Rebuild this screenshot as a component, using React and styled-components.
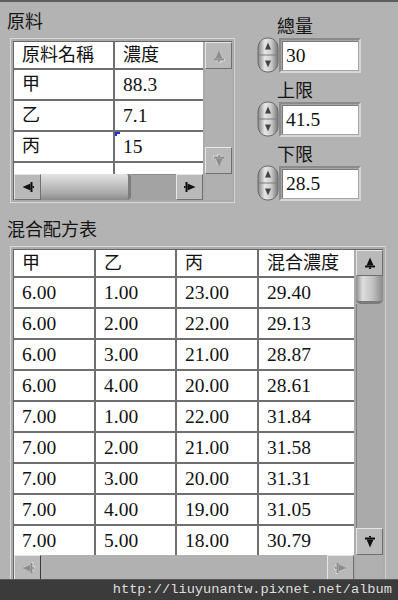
import React from 'react';
import styled, { createGlobalStyle } from 'styled-components';

const GlobalStyle = createGlobalStyle`
  html, body {
    margin: 0;
    padding: 0;
    background: #b3b3b3;
  }
`;

const Panel = styled.div`
  position: relative;
  width: 398px;
  height: 600px;
  box-sizing: border-box;
  overflow: hidden;
  background: #b3b3b3;
  border-top: 2px solid #5c5c5c;
  font-family: "Liberation Serif", "Noto Sans CJK TC", serif;
  color: #111;
`;

const TopSection = styled.div`
  display: flex;
  align-items: flex-start;
  padding-top: 7px;
`;

const LeftPane = styled.div`
  width: 240px;
  padding-left: 10px;
  box-sizing: border-box;
`;

const Caption = styled.div`
  font-family: "Noto Sans CJK TC", sans-serif;
  font-size: 18px;
  line-height: 22px;
  height: 22px;
  margin: 0 0 7px -3px;
  color: #151515;
`;

// bevelled frame round a table
const Frame = styled.div`
  display: inline-block;
  border: 1px solid #dadada;
  border-right-color: #d0d0d0;
  padding: 2px;
  background: #ababab;
`;

const Well = styled.div`
  display: grid;
  grid-template-columns: ${({ $w }) => $w}px 27px;
  grid-template-rows: ${({ $h }) => $h}px 26px;
  column-gap: 2px;
  border-top: 1px solid #666;
  border-left: 1px solid #666;
`;

const CellGrid = styled.div`
  display: grid;
  grid-template-columns: ${({ $cols }) => $cols};
  grid-template-rows: 26px;
  grid-auto-rows: 29px;
  gap: 2px;
  align-content: start;
  background: #6f6f6f;
  overflow: hidden;
`;

const Cell = styled.div`
  position: relative;
  background: #fff;
  padding-left: 8px;
  font-size: ${({ $cjk }) => ($cjk ? '18px' : '19.5px')};
  line-height: ${({ $head }) => ($head ? '26px' : '29px')};
  white-space: nowrap;
  overflow: hidden;
`;

const Caret = styled.span`
  position: absolute;
  left: 0;
  top: 0;
  width: 3px;
  height: 2px;
  border-left: 2px solid #1d2cf0;
  border-top: 2px solid #1d2cf0;
`;

const VScroll = styled.div`
  display: flex;
  flex-direction: column;
  background: ${({ $track }) => $track};
`;

const HScroll = styled.div`
  display: flex;
  background: ${({ $track }) => $track};
`;

const Corner = styled.div`
  background: #b0b0b0;
`;

const ScrollButton = styled.div`
  flex: none;
  width: ${({ $w }) => $w || 27}px;
  height: ${({ $h }) => $h || 27}px;
  box-sizing: border-box;
  display: flex;
  align-items: center;
  justify-content: center;
  background: #b9b9b9;
  border: 1px solid;
  border-color: #e6e6e6 ${({ $dark }) => ($dark ? '#3a3a3a' : '#707070')}
    ${({ $dark }) => ($dark ? '#3a3a3a' : '#707070')} #e6e6e6;
`;

const Spacer = styled.div`
  flex: 1;
`;

const HThumb = styled.div`
  flex: none;
  width: 90px;
  box-sizing: border-box;
  background: linear-gradient(to bottom, #e4e4e4 0%, #c8c8c8 35%, #a9a9a9 75%, #8a8a8a 100%);
  border-right: 3px solid #7d7d7d;
  border-radius: 0 4px 4px 0;
`;

const HTrack = styled.div`
  flex: 1;
  background: #a3a3a3;
  border-top: 1px solid #8a8a8a;
`;

const VThumb = styled.div`
  flex: none;
  height: 28px;
  box-sizing: border-box;
  background: linear-gradient(to right, #8e8e8e 0%, #dedede 25%, #c2c2c2 60%, #8a8a8a 100%);
  border-bottom: 3px solid #7a7a7a;
  border-radius: 0 0 5px 5px;
`;

const VTrack = styled.div`
  flex: 1;
  background: #aaaaaa;
  border-left: 1px solid #7e7e7e;
`;

const RightPane = styled.div`
  display: flex;
  flex-direction: column;
  gap: 5px;
  padding: 5px 0 0 17px;
`;

const Field = styled.div`
  display: flex;
  flex-direction: column;
`;

const FieldLabel = styled.div`
  font-family: "Noto Sans CJK TC", sans-serif;
  font-size: 18px;
  line-height: 22px;
  height: 22px;
  margin: 0 0 1px 20px;
  color: #151515;
`;

const FieldRow = styled.div`
  display: flex;
  align-items: center;
  height: 36px;
`;

const InputFrame = styled.div`
  width: 82px;
  height: 35px;
  box-sizing: border-box;
  border: 2px solid;
  border-color: #8a8a8a #d6d6d6 #d6d6d6 #8a8a8a;
  padding: 1px;
  background: #a6a6a6;
`;

const InputBox = styled.div`
  height: 100%;
  box-sizing: border-box;
  background: #fff;
  border-top: 1px solid #777;
  border-left: 1px solid #777;
  padding-left: 3px;
  font-size: 19.5px;
  line-height: 28px;
`;

const BottomSection = styled.div`
  padding: 14px 0 0 10px;
`;

const Watermark = styled.div`
  position: absolute;
  left: 0;
  right: 0;
  bottom: 0;
  height: 20px;
  background: #3b3b3b;
  border-top: 1px solid #585858;
  color: #dedede;
  font-family: "Liberation Mono", monospace;
  font-size: 13.7px;
  line-height: 20px;
  text-align: right;
  padding-right: 6px;
`;

const Arrow = ({ dir, off }) => {
  const rot = { up: 0, right: 90, down: 180, left: 270 }[dir];
  const shape = (
    <>
      <polygon points="7,1.5 10.5,9.5 3.5,9.5" />
      <rect x="2" y="9.5" width="10" height="2" />
      <rect x="6" y="11.5" width="2" height="1.5" />
    </>
  );
  return (
    <svg width="14" height="14" viewBox="0 0 14 14">
      <g transform={`rotate(${rot} 7 7)`}>
        {off && (
          <g transform="translate(0.8 0.8)" fill="#e4e4e4">
            {shape}
          </g>
        )}
        <g fill={off ? '#8c8c8c' : '#111'}>{shape}</g>
      </g>
    </svg>
  );
};

const Spinner = () => (
  <svg width="22" height="36" viewBox="0 0 22 36">
    <defs>
      <linearGradient id="spin" x1="0" x2="1" y1="0" y2="0">
        <stop offset="0" stopColor="#858585" />
        <stop offset="0.35" stopColor="#e8e8e8" />
        <stop offset="0.65" stopColor="#cdcdcd" />
        <stop offset="1" stopColor="#787878" />
      </linearGradient>
    </defs>
    <rect x="1" y="1" width="20" height="34" rx="9" ry="10" fill="url(#spin)" stroke="#6a6a6a" />
    <line x1="2.5" y1="18" x2="19.5" y2="18" stroke="#7a7a7a" />
    <polygon points="11,5.5 14,12.5 8,12.5" fill="#444" />
    <polygon points="11,30.5 14,23.5 8,23.5" fill="#444" />
  </svg>
);

const materials = [
  ['甲', '88.3'],
  ['乙', '7.1'],
  ['丙', '15'],
  ['', ''],
];

const limits = [
  { label: '總量', value: '30' },
  { label: '上限', value: '41.5' },
  { label: '下限', value: '28.5' },
];

const mixHead = ['甲', '乙', '丙', '混合濃度'];

const mixRows = [
  ['6.00', '1.00', '23.00', '29.40'],
  ['6.00', '2.00', '22.00', '29.13'],
  ['6.00', '3.00', '21.00', '28.87'],
  ['6.00', '4.00', '20.00', '28.61'],
  ['7.00', '1.00', '22.00', '31.84'],
  ['7.00', '2.00', '21.00', '31.58'],
  ['7.00', '3.00', '20.00', '31.31'],
  ['7.00', '4.00', '19.00', '31.05'],
  ['7.00', '5.00', '18.00', '30.79'],
];

export default function App() {
  return (
    <>
      <GlobalStyle />
      <Panel>
        <TopSection>
          <LeftPane>
            <Caption>原料</Caption>
            <Frame>
              <Well $w={189} $h={132}>
                <CellGrid $cols="99px 88px">
                  <Cell $head $cjk>原料名稱</Cell>
                  <Cell $head $cjk>濃度</Cell>
                  {materials.map(([name, val], i) => (
                    <React.Fragment key={i}>
                      <Cell $cjk>{name}</Cell>
                      <Cell>
                        {i === 2 && <Caret />}
                        {val}
                      </Cell>
                    </React.Fragment>
                  ))}
                </CellGrid>
                <VScroll $track="#b1b1b1">
                  <ScrollButton>
                    <Arrow dir="up" off />
                  </ScrollButton>
                  <Spacer />
                  <ScrollButton>
                    <Arrow dir="down" off />
                  </ScrollButton>
                </VScroll>
                <HScroll $track="#a3a3a3">
                  <ScrollButton $w={27} $h={26}>
                    <Arrow dir="left" />
                  </ScrollButton>
                  <HThumb />
                  <HTrack />
                  <ScrollButton $w={27} $h={26}>
                    <Arrow dir="right" />
                  </ScrollButton>
                </HScroll>
                <Corner />
              </Well>
            </Frame>
          </LeftPane>
          <RightPane>
            {limits.map((f) => (
              <Field key={f.label}>
                <FieldLabel>{f.label}</FieldLabel>
                <FieldRow>
                  <Spinner />
                  <InputFrame>
                    <InputBox>{f.value}</InputBox>
                  </InputFrame>
                </FieldRow>
              </Field>
            ))}
          </RightPane>
        </TopSection>

        <BottomSection>
          <Caption>混合配方表</Caption>
          <Frame>
            <Well $w={340} $h={305}>
              <CellGrid $cols="80px 79px 80px 95px">
                {mixHead.map((h) => (
                  <Cell key={h} $head $cjk>{h}</Cell>
                ))}
                {mixRows.map((row, i) =>
                  row.map((v, j) => <Cell key={`${i}-${j}`}>{v}</Cell>)
                )}
              </CellGrid>
              <VScroll $track="#aaaaaa">
                <ScrollButton $h={26}>
                  <Arrow dir="up" />
                </ScrollButton>
                <VThumb />
                <VTrack />
                <ScrollButton>
                  <Arrow dir="down" />
                </ScrollButton>
              </VScroll>
              <HScroll $track="#b1b1b1">
                <ScrollButton $w={27} $h={26} $dark>
                  <Arrow dir="left" off />
                </ScrollButton>
                <Spacer />
                <ScrollButton $w={27} $h={26}>
                  <Arrow dir="right" off />
                </ScrollButton>
              </HScroll>
              <Corner />
            </Well>
          </Frame>
        </BottomSection>

        <Watermark>http://liuyunantw.pixnet.net/album</Watermark>
      </Panel>
    </>
  );
}
